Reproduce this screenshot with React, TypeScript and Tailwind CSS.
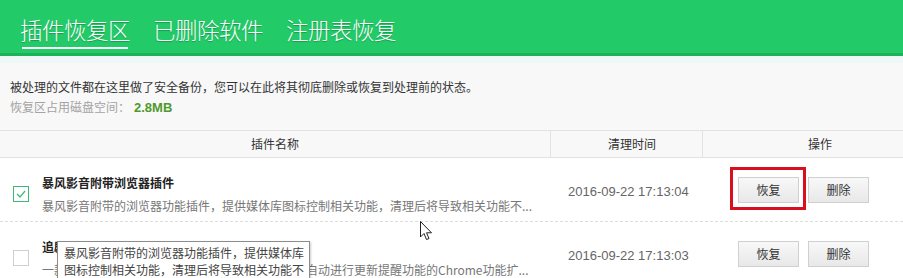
import React from "react";

const cjk = { fontFamily: '"Noto Sans CJK SC", "Noto Sans", sans-serif' };

const tabs = ["插件恢复区", "已删除软件", "注册表恢复"];

const plugins = [
  {
    id: "1",
    name: "暴风影音附带浏览器插件",
    desc: "暴风影音附带的浏览器功能插件，提供媒体库图标控制相关功能，清理后将导致相关功能不...",
    time: "2016-09-22 17:13:04",
    checked: true,
  },
  {
    id: "2",
    name: "追剧功能扩展",
    desc: "一款为用户提供影视剧追踪服务，并在剧集更新后自动进行更新提醒功能的Chrome功能扩...",
    time: "2016-09-22 17:13:03",
    checked: false,
  },
];

const Checkbox: React.FC<{ checked: boolean }> = ({ checked }) => (
  <div
    className={`w-[16px] h-[16px] flex items-center justify-center bg-white border ${
      checked ? "border-[#3cb878]" : "border-[#cfcfcf]"
    }`}
  >
    {checked && (
      <svg width="10" height="8" viewBox="0 0 10 8">
        <path d="M1 4 L4 7 L9 1" fill="none" stroke="#3cb878" strokeWidth="1.2" />
      </svg>
    )}
  </div>
);

const Btn: React.FC<{ label: string }> = ({ label }) => (
  <button className="w-[61px] h-[26px] border border-[#d0d0d0] bg-gradient-to-b from-[#f8f8f8] to-[#e8e8e8] text-[12px] text-[#333] leading-none">
    {label}
  </button>
);

export default function App() {
  return (
    <div className="relative w-[903px] h-[278px] overflow-hidden bg-[#f8f8f8]" style={cjk}>
      {/* Header tabs */}
      <header className="h-[56px] bg-[#22cb68] border-b-[3px] border-[#1db15a] flex px-[20px] gap-[23px] pt-[16px]">
        {tabs.map((t, i) => (
          <div key={t} className="flex flex-col items-center">
            <span className="text-[22.5px] leading-[27px] font-light text-white tracking-[-0.5px] [text-shadow:0_1px_1px_rgba(0,0,0,0.25)]">
              {t}
            </span>
            {i === 0 && <div className="mt-[4px] h-[2px] w-[106px] bg-white" />}
          </div>
        ))}
      </header>
      <div className="h-[7px] bg-[#eef8f6]" />

      {/* Info */}
      <div className="px-[10px] pt-[14px] pb-[12px] text-[12px] leading-[20px]">
        <p className="text-[#333]">
          被处理的文件都在这里做了安全备份，您可以在此将其彻底删除或恢复到处理前的状态。
        </p>
        <p className="text-[#a3a3a3]">
          恢复区占用磁盘空间：
          <span className="ml-[4px] font-bold text-[13px] text-[#4f9a2c]" style={{ fontFamily: '"Liberation Sans", Arial, sans-serif' }}>
            2.8MB
          </span>
        </p>
      </div>

      {/* Table */}
      <div className="grid grid-cols-[551px_152px_1fr] h-[28px] border-y border-[#e2e2e2] bg-[#f8f8f8] text-[12px] text-[#333]">
        <div className="flex items-center justify-center border-r border-[#e2e2e2]">插件名称</div>
        <div className="flex items-center justify-center pl-[11px] border-r border-[#e2e2e2]">清理时间</div>
        <div className="flex items-center justify-center pl-[34px]">操作</div>
      </div>

      {plugins.map((p, i) => (
        <div
          key={p.id}
          className="grid grid-cols-[551px_152px_1fr] h-[64px] bg-white border-b border-dashed border-[#dcdcdc]"
        >
          <div className="flex items-center">
            <div className="pl-[13px] pr-[13px] pt-[8px]">
              <Checkbox checked={p.checked} />
            </div>
            <div className="pt-[9px] leading-[23px]">
              <div className="text-[12px] font-bold text-[#222]">{p.name}</div>
              <div className="text-[12px] text-[#777]">{p.desc}</div>
            </div>
          </div>
          <div
            className="flex items-center pl-[17px] pt-[4px] text-[13px] text-[#666]"
            style={{ fontFamily: '"Liberation Sans", Arial, sans-serif' }}
          >
            {p.time}
          </div>
          <div className="flex items-center pl-[35px] gap-[9px]">
            <div className={i === 0 ? "relative" : ""}>
              <Btn label="恢复" />
              {i === 0 && (
                <div className="absolute left-[-8px] top-[-9px] w-[76px] h-[43px] border-[3px] border-[#d80f1e]" />
              )}
            </div>
            <Btn label="删除" />
          </div>
        </div>
      ))}

      {/* Tooltip */}
      <div className="absolute left-[57px] top-[241px] w-[253px] h-[42px] bg-white border border-[#8c8c8c] shadow-[1px_1px_2px_rgba(0,0,0,0.2)] pl-[6px] pt-[2px] text-[12px] leading-[17px] text-[#444]">
        <div>暴风影音附带的浏览器功能插件，提供媒体库</div>
        <div>图标控制相关功能，清理后将导致相关功能不</div>
      </div>

      {/* Mouse cursor */}
      <svg className="absolute left-[420px] top-[221px]" width="13" height="20" viewBox="0 0 13 20">
        <path
          d="M0.5 0.5 L0.5 16 L4 12.5 L6.5 18.5 L9 17.5 L6.5 11.8 L11.5 11.8 Z"
          fill="white"
          stroke="#222"
          strokeWidth="1"
          strokeLinejoin="round"
        />
      </svg>
    </div>
  );
}
